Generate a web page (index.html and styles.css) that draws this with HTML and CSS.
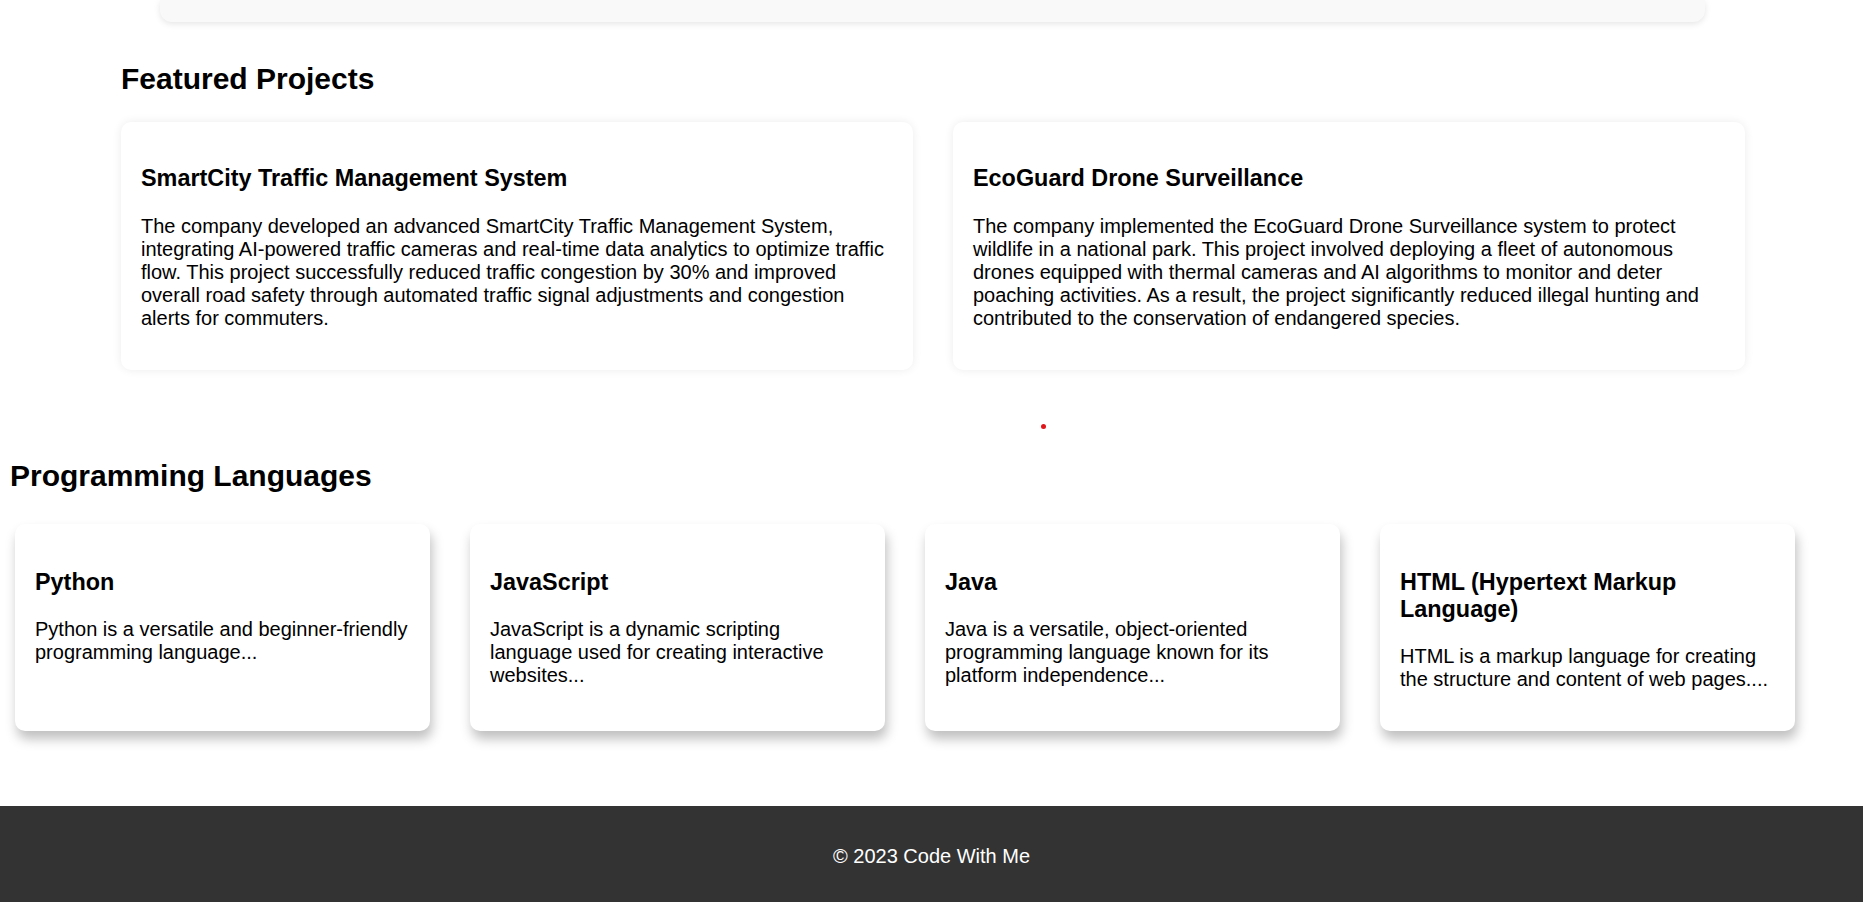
FILE: index.html
```html
<!DOCTYPE html>
<html lang="en">
<head>
<meta charset="utf-8">
<title>Code With Me</title>
<link rel="stylesheet" href="styles.css">
</head>
<body>
<div class="top-panel"></div>

<section class="featured">
  <h2 class="section-title">Featured Projects</h2>
  <div class="project-grid">
    <div class="project-card">
      <h3>SmartCity Traffic Management System</h3>
      <p>The company developed an advanced SmartCity Traffic Management System, integrating AI-powered traffic cameras and real-time data analytics to optimize traffic flow. This project successfully reduced traffic congestion by 30% and improved overall road safety through automated traffic signal adjustments and congestion alerts for commuters.</p>
    </div>
    <div class="project-card">
      <h3>EcoGuard Drone Surveillance</h3>
      <p>The company implemented the EcoGuard Drone Surveillance system to protect wildlife in a national park. This project involved deploying a fleet of autonomous drones equipped with thermal cameras and AI algorithms to monitor and deter poaching activities. As a result, the project significantly reduced illegal hunting and contributed to the conservation of endangered species.</p>
    </div>
  </div>
</section>

<div class="dot"></div>

<section class="languages">
  <h2 class="section-title lang-title">Programming Languages</h2>
  <div class="lang-row">
    <div class="lang-card">
      <h3>Python</h3>
      <p>Python is a versatile and beginner-friendly programming language...</p>
    </div>
    <div class="lang-card">
      <h3>JavaScript</h3>
      <p>JavaScript is a dynamic scripting language used for creating interactive websites...</p>
    </div>
    <div class="lang-card">
      <h3>Java</h3>
      <p>Java is a versatile, object-oriented programming language known for its platform independence...</p>
    </div>
    <div class="lang-card">
      <h3>HTML (Hypertext Markup Language)</h3>
      <p>HTML is a markup language for creating the structure and content of web pages....</p>
    </div>
  </div>
</section>

<footer class="site-footer">
  <p>&copy; 2023 Code With Me</p>
</footer>
</body>
</html>
```

FILE: styles.css
```css
* { box-sizing: border-box; }

body {
  margin: 0;
  font-family: "Liberation Sans", Arial, sans-serif;
  font-size: 20px;
  color: #000;
  background: #fff;
}

.top-panel {
  width: 1545px;
  height: 22px;
  margin-left: 160px;
  background: #f9f9f9;
  border-radius: 0 0 12px 12px;
  box-shadow: 0 2px 6px rgba(0, 0, 0, 0.1);
}

.featured {
  width: 1745px;
  padding-left: 121px;
}

.section-title {
  font-size: 30px;
  font-weight: bold;
  margin: 40px 0 26px;
}

.project-grid {
  display: grid;
  grid-template-columns: 1fr 1fr;
  gap: 40px;
}

.project-card {
  background: #fff;
  border-radius: 10px;
  box-shadow: 0 0 10px rgba(0, 0, 0, 0.08);
  padding: 20px 20px 20px;
}

.project-card h3,
.lang-card h3 {
  font-size: 23.4px;
  font-weight: bold;
  margin: 23.4px 0 22.2px;
}

.project-card p,
.lang-card p {
  margin: 0 0 20px;
}

.dot {
  width: 5px;
  height: 5px;
  margin: 54px 0 0 1041px;
  background: #e0161b;
  border-radius: 50%;
}

.languages {
  padding: 0 10px;
}

.lang-title {
  margin: 30px 0 31px;
}

.lang-row {
  display: flex;
  gap: 40px;
  padding-left: 5px;
  margin-bottom: 75px;
}

.lang-card {
  width: 415px;
  background: #fff;
  border-radius: 10px;
  box-shadow: 2px 8px 12px rgba(0, 0, 0, 0.25);
  padding: 22px 20px 20px;
}

.lang-card h3 {
  margin-bottom: 22px;
}

.site-footer {
  background: #333;
  color: #fff;
  text-align: center;
  padding: 39px 0 40px;
}

.site-footer p {
  margin: 0;
}
```
